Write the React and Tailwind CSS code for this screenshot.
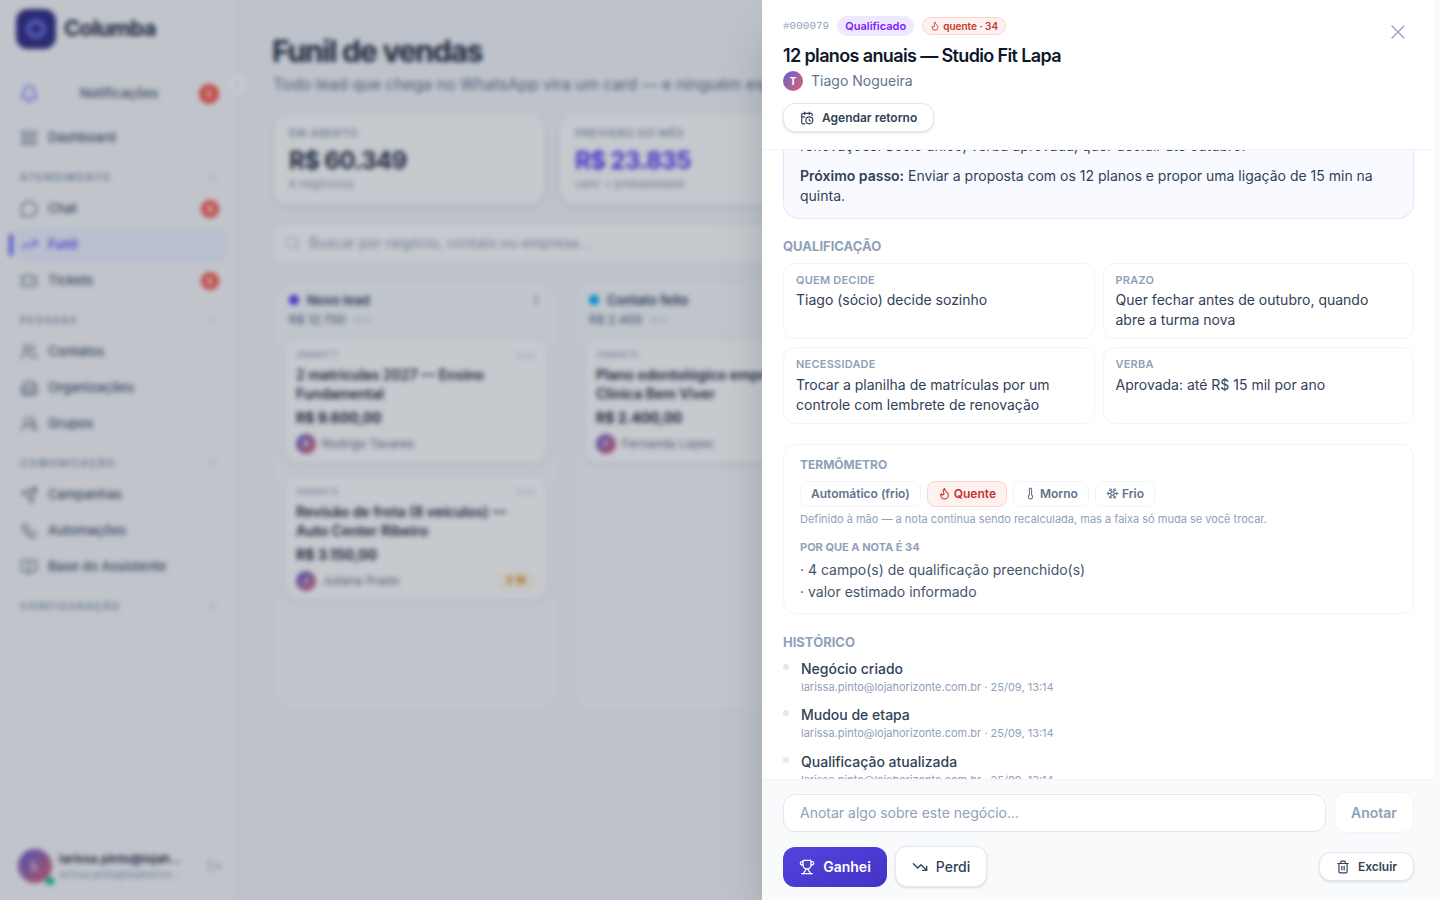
import React from 'react';
import { Bell, LayoutGrid, MessageCircle, TrendingUp, Ticket, ChevronDown, ChevronLeft, Users, Building2, UsersRound, Send, Workflow, BookOpen, LogOut, Search, X, CalendarClock, Flame, Thermometer, Snowflake, Trophy, TrendingDown, Trash2 } from 'lucide-react';

const font = { fontFamily: 'Inter, "Noto Sans", sans-serif' };

const NavItem = ({ icon: Icon, label, badge, active }) => (
    <div className={`relative flex h-9 items-center gap-2.5 rounded-xl pl-[5px] pr-[9px] text-[13px] font-medium ${active ? 'bg-indigo-50 text-indigo-600' : 'text-slate-600'}`}>
        {active && <span className="absolute -left-1.5 top-[7px] h-[22px] w-1 rounded bg-indigo-500" />}
        <Icon size={18} strokeWidth={1.5} />
        <span className="flex-1">{label}</span>
        {badge && <span className="flex h-[18px] w-[18px] items-center justify-center rounded-full bg-[#f95347] text-[10px] font-bold text-white">{badge}</span>}
    </div>
);

const Section = ({ label }) => (
    <div className="mt-3 flex h-[18px] items-center justify-between pl-[5px] pr-[9px] text-[10px] font-bold tracking-[0.16em] text-slate-400">
        {label}
        <ChevronDown size={12} />
    </div>
);

const Sidebar = () => (
    <aside className="relative z-10 flex h-[900px] w-[238px] shrink-0 flex-col border-r border-slate-200 bg-[#f8f9fb]">
        <div className="flex h-[62px] items-center gap-2 border-b border-slate-100 px-4 pb-1">
            <div className="flex h-10 w-10 items-center justify-center rounded-xl bg-indigo-900">
                <span className="h-5 w-5 rounded-full border-[5px] border-indigo-400/70" />
            </div>
            <span className="text-[22px] font-bold tracking-[-0.03em] text-slate-800">Columba</span>
        </div>
        <span className="absolute -right-[11px] top-[74px] flex h-[22px] w-[22px] items-center justify-center rounded-full border border-slate-100 bg-white text-slate-400"><ChevronLeft size={10} /></span>
        <div className="flex flex-1 flex-col pl-[15px] pr-[9px] pt-3.5">
            <div className="flex h-9 items-center pl-1 pr-[9px] text-[13px] font-medium text-slate-600">
                <Bell size={20} strokeWidth={1.75} className="text-indigo-500" />
                <span className="flex-1 text-center">Notificações</span>
                <span className="flex h-5 w-5 items-center justify-center rounded-full bg-[#f95347] text-[10px] font-bold text-white">5</span>
            </div>
            <div className="mt-2"><NavItem icon={LayoutGrid} label="Dashboard" /></div>
            <Section label="ATENDIMENTO" />
            <div className="mt-[5px] flex flex-col">
                <NavItem icon={MessageCircle} label="Chat" badge="9" />
                <NavItem icon={TrendingUp} label="Funil" active />
                <NavItem icon={Ticket} label="Tickets" badge="6" />
            </div>
            <Section label="PESSOAS" />
            <div className="mt-[5px] flex flex-col">
                <NavItem icon={Users} label="Contatos" />
                <NavItem icon={Building2} label="Organizações" />
                <NavItem icon={UsersRound} label="Grupos" />
            </div>
            <Section label="COMUNICAÇÃO" />
            <div className="mt-[5px] flex flex-col">
                <NavItem icon={Send} label="Campanhas" />
                <NavItem icon={Workflow} label="Automações" />
                <NavItem icon={BookOpen} label="Base do Assistente" />
            </div>
            <Section label="CONFIGURAÇÃO" />
        </div>
        <div className="flex h-[68px] items-center gap-[7px] pl-[18px]">
            <div className="relative flex h-[34px] w-[34px] shrink-0 items-center justify-center rounded-full bg-gradient-to-br from-[#5b5bd6] to-[#e0556a] text-xs font-bold text-white">
                L
                <span className="absolute -bottom-0.5 -right-0.5 h-2 w-2 rounded-full bg-emerald-500" />
            </div>
            <div className="w-[124px]">
                <div className="truncate text-xs font-semibold text-slate-800">larissa.pinto@lojah...</div>
                <div className="truncate text-[10px] text-slate-400">larissa.pinto@lojahorizo...</div>
            </div>
            <LogOut size={16} strokeWidth={1.5} className="ml-[17px] text-slate-400" />
        </div>
    </aside>
);

const Kpi = ({ title, value, sub, blue }) => (
    <div className="h-[92px] w-[272px] shrink-0 rounded-2xl border border-slate-100 bg-white px-[15px] pt-[11px] shadow-[0_2px_8px_rgba(15,23,42,0.08)]">
        <div className="text-[11px] font-semibold tracking-wider text-slate-400">{title}</div>
        <div className={`mt-[3px] text-2xl font-bold tracking-tight ${blue ? 'text-indigo-600' : 'text-slate-800'}`}>{value}</div>
        <div className="-mt-px text-[11px] text-slate-400">{sub}</div>
    </div>
);

const DealCard = ({ id, title, value, person, tag }) => (
    <div className="h-[125px] rounded-xl border border-slate-100 bg-white px-2.5 pt-[9px] shadow-[0_2px_8px_rgba(15,23,42,0.08)]">
        <div className="flex items-center justify-between text-[10px] text-slate-400"><span className="font-['Liberation_Mono']">{id}</span><span className="text-[9px] text-slate-300">5min</span></div>
        <div className="mt-[2px] text-sm font-semibold leading-[19px] text-slate-800">{title}</div>
        <div className="mt-[5px] text-sm font-bold text-slate-800">{value}</div>
        <div className="mt-[6px] flex items-center gap-1.5">
            <span className="flex h-5 w-5 items-center justify-center rounded-full bg-gradient-to-br from-[#5b5bd6] to-[#e0556a] text-[9px] font-bold text-white">{person[0]}</span>
            <span className="flex-1 text-xs text-slate-500">{person}</span>
            {tag && <span className="rounded-full bg-amber-50 px-2.5 py-0.5 text-[10px] font-bold text-amber-600">{tag}</span>}
        </div>
    </div>
);

const Column = ({ dot, title, total, count, children }) => (
    <div className="h-[428px] w-[282px] shrink-0 rounded-2xl border border-slate-100 bg-slate-50 p-[9px] pt-[10px]">
        <div className="flex items-center justify-between px-1 text-[13px] font-semibold leading-[14px] text-slate-700">
            <span className="flex items-center gap-2"><span className={`h-2.5 w-2.5 rounded-full ${dot}`} />{title}</span>
            <span className="mr-1 text-[10px] text-slate-400">{count}</span>
        </div>
        <div className="mt-[5px] px-1 text-xs font-medium leading-4 text-slate-500">{total} <span className="ml-1 text-[10px] text-slate-300">10%</span></div>
        <div className="mt-[10px] flex flex-col gap-[11.5px]">{children}</div>
    </div>
);

const Board = () => (
    <main className="h-[900px] flex-1 overflow-hidden bg-[#f5f7fb] pl-[35px] pt-[33px]">
        <h1 className="-ml-px text-[30px] font-bold leading-9 tracking-[-0.04em] text-slate-800">Funil de vendas</h1>
        <p className="mt-[5px] whitespace-nowrap text-base leading-5 text-slate-500">Todo lead que chega no WhatsApp vira um card — e ninguém esquece de responder.</p>
        <div className="mt-[19px] flex gap-3.5">
            <Kpi title="EM ABERTO" value="R$ 60.349" sub="8 negócio(s)" />
            <Kpi title="PREVISÃO DO MÊS" value="R$ 23.835" sub="valor × probabilidade" blue />
        </div>
        <div className="mt-[19px] flex h-[38px] w-[900px] items-center gap-2 rounded-xl border border-slate-100 bg-white px-[11px] text-sm text-slate-400">
            <Search size={16} strokeWidth={1.5} />Buscar por negócio, contato ou empresa...
        </div>
        <div className="ml-0.5 mt-5 flex gap-[18px]">
            <Column dot="bg-indigo-600" title="Novo lead" total="R$ 12.750" count="2">
                <DealCard id="#000077" title="2 matrículas 2027 — Ensino Fundamental" value="R$ 9.600,00" person="Rodrigo Tavares" />
                <DealCard id="#000074" title="Revisão de frota (8 veículos) — Auto Center Ribeiro" value="R$ 3.150,00" person="Juliana Prado" tag="3 16" />
            </Column>
            <Column dot="bg-sky-500" title="Contato feito" total="R$ 2.400" count="1">
                <DealCard id="#000075" title="Plano odontológico empresarial — Clínica Bem Viver" value="R$ 2.400,00" person="Fernanda Lopes" />
            </Column>
        </div>
    </main>
);

const QualCard = ({ label, text }) => (
    <div className="h-[76.3px] rounded-xl border border-slate-100 bg-white px-3 pt-2">
        <div className="text-[11px] font-semibold leading-4 tracking-[0.02em] text-slate-400">{label}</div>
        <div className="mt-[2.3px] text-sm leading-5 text-slate-700">{text}</div>
    </div>
);

const HistoryItem = ({ title }) => (
    <div className="relative h-[46.5px] pl-[18px]">
        <span className="absolute left-0 top-[5px] h-1.5 w-1.5 rounded-full bg-slate-200" />
        <div className="text-sm font-medium leading-5 text-slate-700">{title}</div>
        <div className="text-[11px] leading-4 text-slate-400">larissa.pinto@lojahorizonte.com.br · 25/09, 13:14</div>
    </div>
);

const Chip = ({ children, active }) => (
    <span className={`flex h-[26px] items-center gap-[3px] rounded-lg border px-2.5 text-xs font-semibold ${active ? 'border-[#fcd5ce] bg-[#fef2f0] text-[#c2352b]' : 'border-slate-100 bg-white text-slate-500'}`}>{children}</span>
);

const Drawer = () => (
    <div className="absolute inset-y-0 right-0 z-20 flex w-[678px] transform-gpu flex-col bg-[#fafafc] shadow-2xl">
        <header className="relative z-10 mr-1.5 h-[150px] shrink-0 border-b border-slate-100 bg-white pl-[21px] pt-4">
            <div className="flex items-center gap-2">
                <span className="font-['Liberation_Mono'] text-[11px] text-slate-400">#000079</span>
                <span className="flex h-5 items-center rounded-full bg-violet-100 px-2 text-[11px] font-semibold text-violet-600">Qualificado</span>
                <span className="flex h-[18px] items-center gap-[3px] rounded-full border border-[#fcd5ce] bg-[#fef2f0] px-[7px] text-[10px] font-semibold text-[#c2352b]"><Flame size={10} />quente · 34</span>
            </div>
            <h2 className="mt-[6px] text-lg font-semibold leading-7 tracking-[-0.035em] text-slate-900">12 planos anuais — Studio Fit Lapa</h2>
            <div className="mt-px flex items-center gap-2 text-sm text-slate-500">
                <span className="flex h-5 w-5 items-center justify-center rounded-full bg-gradient-to-br from-[#5b5bd6] to-[#e0556a] text-[10px] font-bold text-white">T</span>
                Tiago Nogueira
            </div>
            <button className="mt-3 flex h-[29px] items-center gap-2 rounded-xl border border-slate-200 bg-white px-4 text-xs font-semibold text-slate-700 shadow-sm">
                <CalendarClock size={14} />Agendar retorno
            </button>
            <X size={24} strokeWidth={1.25} className="absolute right-6 top-5 text-slate-400" />
        </header>
        <div className="mr-1.5 h-[629px] shrink-0 overflow-hidden bg-white pl-[21px] pr-5">
            <div className="-mt-[14px] rounded-b-2xl border border-t-0 border-indigo-100 bg-indigo-50/40 px-4 pb-3">
                <p className="text-sm leading-5 text-slate-700">renovações. Sócio único, verba aprovada, quer decidir até outubro.</p>
                <p className="mt-2.5 text-sm leading-5 text-slate-700"><b className="font-semibold">Próximo passo:</b> Enviar a proposta com os 12 planos e propor uma ligação de 15 min na quinta.</p>
            </div>
            <h3 className="mt-[17px] text-[13px] font-bold leading-5 text-slate-400">QUALIFICAÇÃO</h3>
            <div className="mt-[7px] grid grid-cols-2 gap-2">
                <QualCard label="QUEM DECIDE" text="Tiago (sócio) decide sozinho" />
                <QualCard label="PRAZO" text="Quer fechar antes de outubro, quando abre a turma nova" />
                <QualCard label="NECESSIDADE" text="Trocar a planilha de matrículas por um controle com lembrete de renovação" />
                <QualCard label="VERBA" text="Aprovada: até R$ 15 mil por ano" />
            </div>
            <section className="mt-[20.4px] h-[170px] rounded-xl border border-slate-100 bg-white px-4 pt-2.5">
                <h3 className="text-xs font-bold leading-5 text-slate-400">TERMÔMETRO</h3>
                <div className="mt-1.5 flex gap-1.5">
                    <Chip>Automático (frio)</Chip>
                    <Chip active><Flame size={13} />Quente</Chip>
                    <Chip><Thermometer size={13} />Morno</Chip>
                    <Chip><Snowflake size={13} />Frio</Chip>
                </div>
                <p className="mt-1 text-[11px] leading-4 text-slate-400">Definido à mão — a nota continua sendo recalculada, mas a faixa só muda se você trocar.</p>
                <h4 className="mt-3 text-[11px] font-bold leading-4 text-slate-400">POR QUE A NOTA É 34</h4>
                <ul className="mt-1 text-sm leading-[22px] text-slate-600">
                    <li>· 4 campo(s) de qualificação preenchido(s)</li>
                    <li>· valor estimado informado</li>
                </ul>
            </section>
            <h3 className="mt-[18px] text-[13px] font-bold leading-5 text-slate-400">HISTÓRICO</h3>
            <div className="mt-[6.8px]">
                <HistoryItem title="Negócio criado" />
                <HistoryItem title="Mudou de etapa" />
                <HistoryItem title="Qualificação atualizada" />
            </div>
        </div>
        <footer className="mr-1.5 flex-1 border-t border-slate-100 bg-slate-50 pl-[21px] pr-5 pt-3">
            <div className="flex items-center gap-2">
                <div className="flex h-[38px] flex-1 items-center rounded-xl border border-slate-200 bg-white px-4 text-sm text-slate-400">Anotar algo sobre este negócio...</div>
                <button className="h-[41px] w-20 rounded-xl border border-slate-100 bg-white text-sm font-semibold text-slate-400">Anotar</button>
            </div>
            <div className="mt-[13px] flex items-center gap-2">
                <button className="flex h-10 w-[104px] items-center justify-center gap-2 rounded-xl bg-gradient-to-br from-[#5344e0] to-[#4333c4] text-sm font-semibold text-white"><Trophy size={16} />Ganhei</button>
                <button className="flex h-[41px] w-[92px] items-center justify-center gap-2 rounded-xl border border-slate-200 bg-white text-sm font-medium text-slate-700 shadow-sm"><TrendingDown size={16} />Perdi</button>
                <button className="ml-auto flex h-[29px] w-[95px] items-center justify-center gap-2 rounded-xl border border-slate-200 bg-white text-xs font-semibold text-slate-700 shadow-sm"><Trash2 size={14} />Excluir</button>
            </div>
        </footer>
    </div>
);

export default function App() {
    return (
        <div className="relative flex h-[900px] w-[1440px] overflow-hidden" style={font}>
            <Sidebar />
            <Board />
            {/* Overlay over the blurred page */}
            <div className="absolute inset-0 z-10 bg-slate-800/25 backdrop-blur-[2.5px]" />
            <Drawer />
        </div>
    );
}
